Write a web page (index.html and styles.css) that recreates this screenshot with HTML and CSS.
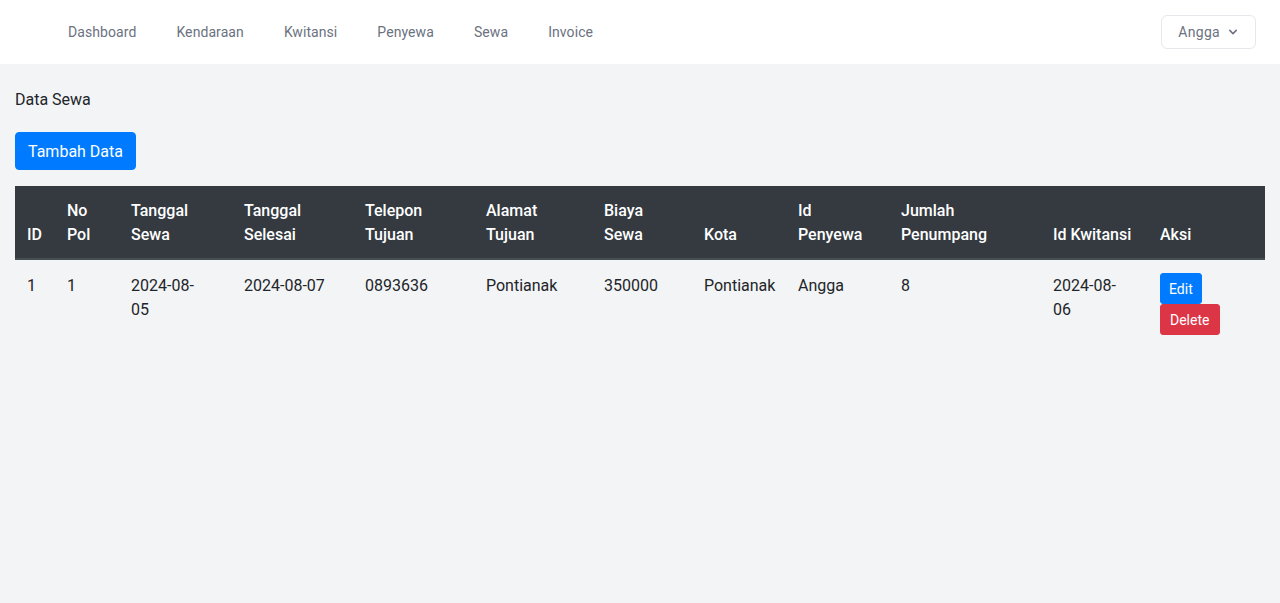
FILE: index.html
```html
<!DOCTYPE html>
<html lang="id">
<head>
<meta charset="utf-8">
<title>Data Sewa</title>
<link rel="stylesheet" href="styles.css">
</head>
<body>
<nav class="topnav">
  <div class="nav-links">
    <a href="#" class="nav-link">Dashboard</a>
    <a href="#" class="nav-link">Kendaraan</a>
    <a href="#" class="nav-link">Kwitansi</a>
    <a href="#" class="nav-link">Penyewa</a>
    <a href="#" class="nav-link">Sewa</a>
    <a href="#" class="nav-link">Invoice</a>
  </div>
  <button class="user-btn" type="button">Angga
    <svg class="chev" viewBox="0 0 20 20" width="16" height="16"><path fill="currentColor" fill-rule="evenodd" d="M5.293 7.293a1 1 0 011.414 0L10 10.586l3.293-3.293a1 1 0 111.414 1.414l-4 4a1 1 0 01-1.414 0l-4-4a1 1 0 010-1.414z" clip-rule="evenodd"/></svg>
  </button>
</nav>
<main class="content">
  <p class="page-title">Data Sewa</p>
  <a href="#" class="btn btn-primary btn-add">Tambah Data</a>
  <table class="data-table">
    <colgroup>
      <col class="c-id"><col class="c-nopol"><col class="c-tsewa"><col class="c-tselesai"><col class="c-telp"><col class="c-alamat"><col class="c-biaya"><col class="c-kota"><col class="c-penyewa"><col class="c-jumlah"><col class="c-kwit"><col class="c-aksi">
    </colgroup>
    <thead>
      <tr>
        <th>ID</th><th>No Pol</th><th>Tanggal Sewa</th><th>Tanggal Selesai</th><th>Telepon Tujuan</th><th>Alamat Tujuan</th><th>Biaya Sewa</th><th>Kota</th><th>Id Penyewa</th><th>Jumlah Penumpang</th><th>Id Kwitansi</th><th>Aksi</th>
      </tr>
    </thead>
    <tbody>
      <tr>
        <td>1</td><td>1</td><td>2024-08-<br>05</td><td>2024-08-07</td><td>0893636</td><td>Pontianak</td><td>350000</td><td>Pontianak</td><td>Angga</td><td>8</td><td>2024-08-<br>06</td>
        <td class="aksi"><a href="#" class="btn btn-sm btn-primary">Edit</a><br><button class="btn btn-sm btn-danger" type="button">Delete</button></td>
      </tr>
    </tbody>
  </table>
</main>
</body>
</html>
```
FILE: styles.css
```css
* { box-sizing: border-box; }
html, body { margin: 0; padding: 0; }
body {
  background: #f3f4f6;
  font-family: Roboto, "Noto Sans", "Liberation Sans", sans-serif;
  color: #212529;
  font-size: 16px;
  line-height: 1.5;
  min-height: 603px;
}
.topnav {
  height: 64px;
  background: #fff;
  display: flex;
  align-items: center;
  justify-content: space-between;
  padding: 0 24px 0 64px;
}
.nav-links { display: flex; gap: 32px; height: 100%; padding-top: 1px; }
.nav-link {
  display: inline-flex;
  align-items: center;
  padding: 0 4px;
  font-size: 14px;
  color: #6b7280;
  text-decoration: none;
  font-weight: 400;
  letter-spacing: 0.08px;
}
.user-btn {
  display: inline-flex;
  align-items: center;
  height: 34px;
  padding: 0 14px 0 16px;
  background: #fff;
  border: 1px solid #e5e7eb;
  border-radius: 6px;
  font-family: inherit;
  font-size: 14px;
  font-weight: 400;
  color: #6b7280;
  letter-spacing: 0.3px;
  gap: 5px;
}
.content { padding: 0 15px; }
.page-title { margin: 0; padding: 24px 0 20px; line-height: 24px; }
.btn {
  display: inline-block;
  font-family: inherit;
  border: 1px solid transparent;
  color: #fff;
  text-decoration: none;
  border-radius: 4px;
  cursor: pointer;
}
.btn-add { padding: 7px 12px 5px; font-size: 16px; line-height: 24px; }
.btn-primary { background: #007bff; border-color: #007bff; }
.btn-danger { background: #dc3545; border-color: #dc3545; }
.btn-sm { padding: 5px 8px 3px; font-size: 14px; line-height: 21px; border-radius: 3px; }
.btn-danger.btn-sm { padding: 5px 10px 3px 9px; }
.data-table {
  margin-top: 16px;
  width: 1250px;
  border-collapse: collapse;
  table-layout: fixed;
}
.c-id { width: 40px; } .c-nopol { width: 64px; } .c-tsewa { width: 113px; } .c-tselesai { width: 121px; }
.c-telp { width: 121px; } .c-alamat { width: 118px; } .c-biaya { width: 100px; } .c-kota { width: 94px; }
.c-penyewa { width: 103px; } .c-jumlah { width: 152px; } .c-kwit { width: 107px; } .c-aksi { width: 117px; }
.data-table th {
  background: #343a40;
  color: #fff;
  font-weight: 500;
  text-align: left;
  vertical-align: bottom;
  padding: 13px 12px 11px;
  border-bottom: 2px solid #454d55;
}
.data-table td { padding: 14px 12px 12px; vertical-align: top; }
.data-table td.aksi { padding-top: 13px; }
```
